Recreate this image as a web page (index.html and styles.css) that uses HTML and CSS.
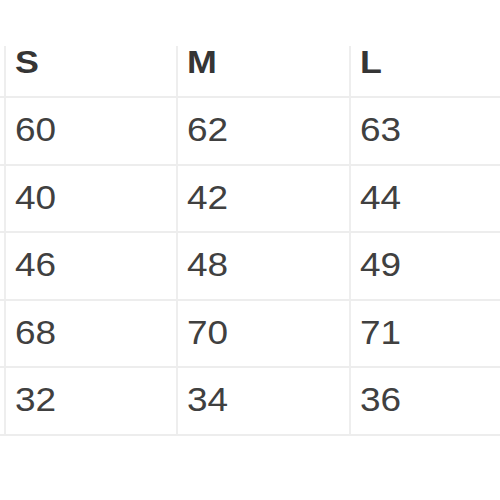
FILE: index.html
```html
<!DOCTYPE html>
<html>
<head>
<meta charset="utf-8">
<link rel="stylesheet" href="styles.css">
</head>
<body>
<div class="sheet">
  <div class="row head">
    <div class="lead"></div>
    <div class="cell"><span>S</span></div>
    <div class="cell"><span>M</span></div>
    <div class="cell"><span>L</span></div>
  </div>
  <div class="row r68">
    <div class="lead"></div>
    <div class="cell"><span>60</span></div>
    <div class="cell"><span>62</span></div>
    <div class="cell"><span>63</span></div>
  </div>
  <div class="row r67">
    <div class="lead"></div>
    <div class="cell"><span>40</span></div>
    <div class="cell"><span>42</span></div>
    <div class="cell"><span>44</span></div>
  </div>
  <div class="row r68">
    <div class="lead"></div>
    <div class="cell"><span>46</span></div>
    <div class="cell"><span>48</span></div>
    <div class="cell"><span>49</span></div>
  </div>
  <div class="row r67">
    <div class="lead"></div>
    <div class="cell"><span>68</span></div>
    <div class="cell"><span>70</span></div>
    <div class="cell"><span>71</span></div>
  </div>
  <div class="row r68">
    <div class="lead"></div>
    <div class="cell"><span>32</span></div>
    <div class="cell"><span>34</span></div>
    <div class="cell"><span>36</span></div>
  </div>
</div>
</body>
</html>
```
FILE: styles.css
```css
html, body {
  margin: 0;
  padding: 0;
  background: #ffffff;
}
body {
  width: 500px;
  height: 500px;
  overflow: hidden;
  font-family: "Liberation Sans", Arial, Helvetica, sans-serif;
  color: #404040;
}
.sheet {
  padding-top: 46px;
  width: 500px;
  overflow: hidden;
}
.row {
  display: grid;
  grid-template-columns: 4px 172px 173px 173px;
  border-bottom: 2px solid #ededed;
  box-sizing: border-box;
  width: 600px;
}
.cell {
  border-left: 2px solid #eeeeee;
  padding-left: 9px;
  box-sizing: border-box;
  line-height: 1;
}
.cell span {
  display: inline-block;
  transform: scaleX(1.12);
  transform-origin: left center;
}
.head {
  height: 52px;
  font-weight: bold;
  font-size: 32px;
  color: #353535;
}
.r68, .r67 {
  font-size: 33px;
}
.r68 { height: 68px; }
.r67 { height: 67px; }
.r68 .cell, .r67 .cell {
  padding-top: 15px;
}
```
